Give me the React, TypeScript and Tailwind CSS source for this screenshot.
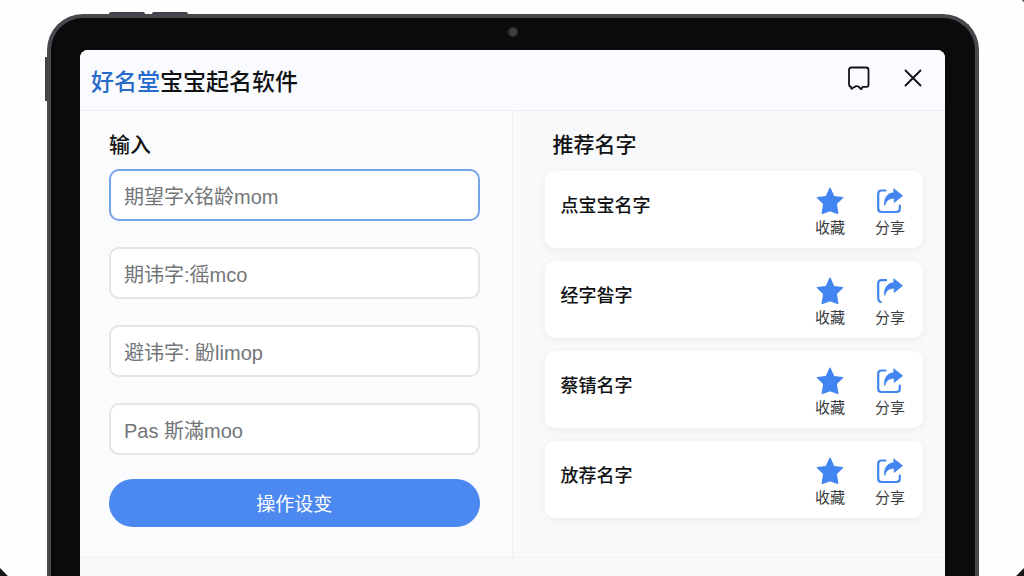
const fields = [
  { id: "expected", label: "期望字", placeholder: "期望字x铭龄mom", active: true },
  { id: "taboo", label: "期讳字", placeholder: "期讳字:徭mco" },
  { id: "avoid", label: "避讳字", placeholder: "避讳字: 鼢limop" },
  { id: "extra", label: "其他", placeholder: "Pas 斯滿moo" },
];

const names = [
  { title: "点宝宝名字", openShare: false },
  { title: "经字昝字", openShare: true },
  { title: "蔡锖名字", openShare: false },
  { title: "放荐名字", openShare: false },
];

function StarIcon() {
  return (
    <svg className="w-7 h-7" viewBox="0 0 28 28" fill="currentColor">
      <path
        stroke="currentColor"
        strokeWidth={1.4}
        strokeLinejoin="round"
        d="M14 1.200l3.700 8.400 8.900 1-6.400 6.200 1.500 9.600-7.700-2.800-7.700 2.800 1.500-9.600-6.400-6.200 8.900-1z"
      />
    </svg>
  );
}

function ShareIcon({ open }: { open: boolean }) {
  return (
    <svg className="w-7 h-7" viewBox="0 0 28 28" fill="none">
      <path
        stroke="currentColor"
        strokeWidth={2.2}
        strokeLinecap="round"
        strokeLinejoin="round"
        d={
          open
            ? "M10 3.200H5.500Q2.200 3.200 2.200 6.500V20Q2.200 24.500 4.800 25"
            : "M9.500 3.500H5.500Q2.200 3.500 2.200 6.800V21.500Q2.200 25 5.500 25H20.500Q23.800 25 23.800 21.500V18.500"
        }
      />
      <path
        fill="currentColor"
        stroke="currentColor"
        strokeWidth={0.8}
        strokeLinejoin="round"
        d="M17.800 1.800L26.500 8.700L18.200 15.500V11.200C13 11.200 10 13.500 8.800 18.500C7.500 11.500 11.500 6 17.800 5.800Z"
      />
    </svg>
  );
}

function BookmarkIcon() {
  return (
    <svg className="w-6 h-6" viewBox="0 0 24 24" fill="none">
      <path
        stroke="currentColor"
        strokeWidth={1.8}
        strokeLinecap="round"
        strokeLinejoin="round"
        d="M4.500 1.500H19Q21.500 1.500 21.500 4V18.500Q21.500 20.800 19.500 20.800H15.500L14.300 23.300L11.500 20.500Q9 19.500 7.500 21L4.500 22.800L3.800 20.600Q2 20.300 2 18.500V4Q2 1.500 4.500 1.500Z"
      />
    </svg>
  );
}

function CloseIcon() {
  return (
    <svg className="w-5 h-5" viewBox="0 0 20 20" fill="none">
      <path
        stroke="currentColor"
        strokeWidth={1.9}
        strokeLinecap="round"
        d="M2.500 2.500l15 15M17.500 2.500l-15 15"
      />
    </svg>
  );
}

export default function App() {
  return (
    <div className="relative flex h-screen flex-col overflow-hidden bg-[#fefefe] pt-3.5 pr-[45px] pl-[47px] font-['Noto_Sans_CJK_SC',sans-serif] text-[#111214]">
      {/* dark corners behind the device */}
      <span className="absolute -bottom-2 -left-2 h-3.5 w-3.5 rotate-45 bg-[#15171a]" />
      <span className="absolute -bottom-2 -right-2 h-3.5 w-3.5 rotate-45 bg-[#15171a]" />
      <span className="absolute -top-1 -right-1 h-1.5 w-1.5 rotate-45 bg-[#4b5558]" />

      <div className="relative flex flex-1 flex-col rounded-t-[36px] border-x-4 border-t-4 border-[#45484c] bg-[#0b0b0c] pt-8 pr-[30px] pl-[29px]">
        {/* hardware keys and camera */}
        <span className="absolute -top-1.5 left-[58px] h-0.5 w-9 rounded-t-sm bg-[#3f4246]" />
        <span className="absolute -top-1.5 left-[101px] h-0.5 w-9 rounded-t-sm bg-[#3f4246]" />
        <span className="absolute -left-1.5 top-[39px] h-11 w-0.5 bg-[#3f4246]" />
        <span className="absolute left-1/2 top-[9px] h-2.5 w-2.5 -translate-x-1/2 rounded-full border-2 border-[#303136] bg-[#414248]" />

        <main className="flex-1 rounded-t-lg bg-[#f8f9fb]">
          <header className="flex h-[61px] items-center justify-between rounded-t-lg border-b border-[#eceef1] bg-[#fafbfe] pl-[11px] pr-[22px]">
            <h1 className="text-[23px] leading-8 font-medium">
              <span className="text-[#276bcb]">好名堂</span>宝宝起名软件
            </h1>
            <div className="flex items-center gap-8 pb-1">
              <button aria-label="书签">
                <BookmarkIcon />
              </button>
              <button aria-label="关闭">
                <CloseIcon />
              </button>
            </div>
          </header>

          <div className="grid grid-cols-2 border-b border-[#eff1f3]">
            <form className="flex flex-col border-r border-[#eff1f4] bg-[#fafbfd] pt-4 pr-8 pb-[30px] pl-[29px]">
              <h2 className="mb-2.5 text-[21px] leading-8 font-medium">输入</h2>
              <div className="flex flex-col gap-[26px]">
                {fields.map((field) => (
                  <input
                    key={field.id}
                    aria-label={field.label}
                    placeholder={field.placeholder}
                    className={`block h-[52px] w-full rounded-[10px] border-2 bg-white px-[13px] pt-1 font-['Liberation_Sans','Noto_Sans_CJK_SC',sans-serif] text-xl text-[#6f7275] outline-none placeholder:text-[#737679] ${
                      field.active ? "border-[#76a4e8]" : "border-[#e4e5e7]"
                    }`}
                  />
                ))}
              </div>
              <button
                type="button"
                className="mt-6 h-12 rounded-full bg-[#4b88f0] text-[19px] text-white"
              >
                操作设变
              </button>
            </form>

            <section className="bg-[#f8f9fb] pt-4 pr-[22px] pl-8">
              <h2 className="mb-3 pl-2 text-[21px] leading-8 font-medium">
                推荐名字
              </h2>
              <ul className="flex flex-col gap-[13px]">
                {names.map((name) => (
                  <li
                    key={name.title}
                    className="flex h-[77px] items-start justify-between rounded-[10px] bg-white pr-[17px] pl-4 shadow-[0_2px_8px_rgba(0,0,0,0.06)]"
                  >
                    <span className="pt-5 text-lg leading-[26px] font-medium">
                      {name.title}
                    </span>
                    <div className="flex gap-7 pt-4">
                      <button className="flex w-8 flex-col items-center text-[#4285f0]">
                        <StarIcon />
                        <span className="text-[15px] leading-6 text-[#3a3c40]">
                          收藏
                        </span>
                      </button>
                      <button className="flex w-8 flex-col items-center text-[#4285f0]">
                        <ShareIcon open={name.openShare} />
                        <span className="text-[15px] leading-6 text-[#3a3c40]">
                          分享
                        </span>
                      </button>
                    </div>
                  </li>
                ))}
              </ul>
            </section>
          </div>
        </main>
      </div>
    </div>
  );
}
